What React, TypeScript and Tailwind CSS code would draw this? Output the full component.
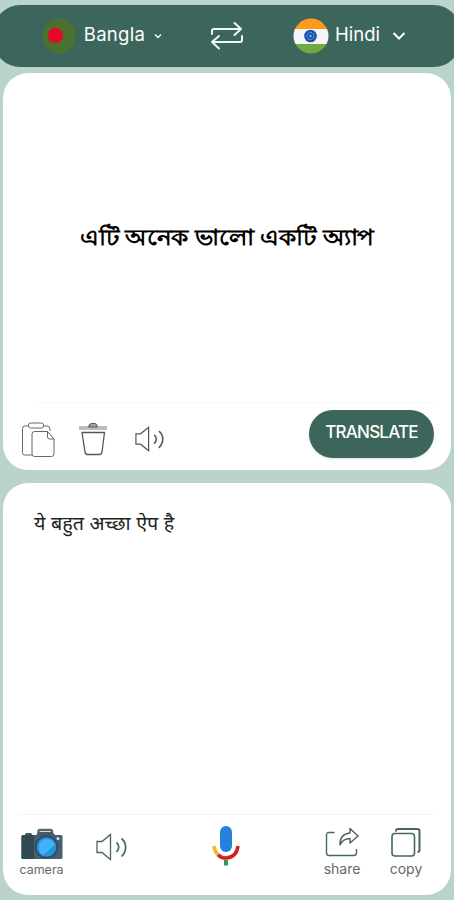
import { useState } from "react";

const textFont = "font-['Inter','Noto_Sans',sans-serif]";

function SpeakerIcon({ className }: { className: string }) {
  return (
    <svg viewBox="0 0 32 28" fill="none" stroke="currentColor" strokeWidth="1.300" className={className}>
      <path d="M1 8.500h5L14.500 1.500v25L6 19.500H1z" />
      <path d="M20.500 9.500c3 2.500 3 6.500 0 9.500M25.500 5.500c5.500 4.500 5.500 12.500 0 18" strokeWidth="1.700" />
    </svg>
  );
}

function PasteIcon() {
  return (
    <svg viewBox="0 0 34 36" fill="none" stroke="#66666e" className="h-9 w-[34px]">
      <path d="M8 4H3.500Q1.500 4 1.500 6.500V30.500Q1.500 33 3.500 33H11M22 4H26Q29 4 29 7V9" />
      <rect x="7.500" y="1" width="15" height="5" rx="2" />
      <path d="M26.500 9.500H13.500Q11 9.500 11 12V32Q11 34.500 13.500 34.500H30.500Q33 34.500 33 32V17z" />
      <path d="M26.500 9.500V15Q26.500 17 28.500 17H33" />
    </svg>
  );
}

function TrashIcon() {
  return (
    <svg viewBox="0 0 28 34" fill="none" stroke="#55555f" className="h-[34px] w-7">
      <path d="M0 4H28M0 6H28" strokeWidth="0.8" />
      <path d="M9.500 4Q10 0.500 12.500 0.500H16Q18 0.500 18.500 4z" fill="#a4a4aa" />
      <path d="M3 9.500H25.500L23 29Q22.500 31.500 20.500 31.500H8.500Q6.500 31.500 6 29z" strokeWidth="1.300" />
    </svg>
  );
}

function SwapIcon() {
  return (
    <svg viewBox="0 0 34 30" fill="none" stroke="#f3f8f6" strokeWidth="2" strokeLinecap="round" strokeLinejoin="round" className="h-[30px] w-[34px]">
      <path d="M2 13V10Q2 8 4 8H31M24.500 2L31 8L24.500 14" />
      <path d="M32 15V19Q32 21 30 21H2M9 15L2 21L9 27.500" />
    </svg>
  );
}

function BanglaFlag() {
  return (
    <svg viewBox="0 0 34 36" className="h-9 w-[34px]">
      <ellipse cx="17" cy="18" rx="16.500" ry="17.500" fill="#4b7030" />
      <circle cx="13.500" cy="17.500" r="7.700" fill="#e30a2b" />
    </svg>
  );
}

function IndiaFlag() {
  return (
    <svg viewBox="0 0 36 36" className="size-9">
      <clipPath id="india">
        <circle cx="18" cy="18" r="17.500" />
      </clipPath>
      <g clipPath="url(#india)">
        <path d="M0 0h36v11H0z" fill="#fb9b1b" />
        <path d="M0 11h36v15H0z" fill="#f3f5f8" />
        <path d="M0 26h36v10H0z" fill="#72a842" />
      </g>
      <circle cx="17.500" cy="18" r="6.300" fill="#1c50ad" />
      <circle cx="17.500" cy="18" r="3.600" fill="none" stroke="#8cace0" strokeDasharray="2 1.200" />
      <circle cx="17.500" cy="18" r="1.200" fill="#8cace0" />
    </svg>
  );
}

function CameraIcon() {
  return (
    <svg viewBox="0 0 42 32" className="h-8 w-[42px]">
      <path d="M17.500 6V3.500Q17.500 2 19 2H29.500Q31 2 31 3.500V6" fill="none" stroke="#536a68" strokeWidth="2.500" />
      <rect x="4" y="5" width="7" height="4" rx="1.500" fill="#3e565c" />
      <rect x="0.500" y="7" width="41" height="24" rx="1.500" fill="#485e6e" />
      <path d="M2 7H13V31H2Q0.500 31 0.500 29.500V8.500Q0.500 7 2 7" fill="#324a56" />
      <path d="M15 7L18 4H31L34 7" fill="#435b64" />
      <circle cx="25.500" cy="19" r="11.500" fill="#344a5c" />
      <circle cx="25.500" cy="19" r="9.800" fill="#2196e8" />
      <path d="M18 19Q18 12 25.500 11Q32 11 34 17L22 27Q18 25 18 19" fill="#42b2f5" />
      <circle cx="37" cy="10.500" r="1.500" fill="#d9e4e6" />
    </svg>
  );
}

function MicIcon() {
  return (
    <svg viewBox="0 0 28 40" fill="none" className="h-10 w-7">
      <rect x="8" y="0" width="12" height="26" rx="6" fill="#2383dc" />
      <path d="M14 34V39.500" stroke="#2ea04a" strokeWidth="4" />
      <path d="M2 20Q2.500 25.500 6 28.700" stroke="#f5b921" strokeWidth="3.500" />
      <path d="M6 28.700Q9 32 14 32Q24.500 31.500 26 20" stroke="#d6211f" strokeWidth="3.500" />
    </svg>
  );
}

function ShareIcon() {
  return (
    <svg viewBox="0 0 34 30" fill="none" stroke="#47665d" strokeWidth="1.400" strokeLinejoin="round" className="h-[30px] w-[34px]">
      <path d="M9.500 5.500H4Q1.500 5.500 1.500 8V25.500Q1.500 28.500 4 28.500H29Q31.500 28.500 31.500 25.500V22" />
      <path d="M15 18Q14.500 7 25 6V1.500L33 9L25 16V11.500Q18 11.500 15 18z" />
    </svg>
  );
}

function CopyIcon() {
  return (
    <svg viewBox="0 0 32 31" fill="none" stroke="#47665d" strokeWidth="1.600" className="h-[31px] w-8">
      <rect x="2" y="6.500" width="22.500" height="22.500" rx="3" />
      <path d="M6 4.500V4Q6 2 8 2H27Q29.500 2 29.500 4V23Q29.500 25 27.500 25" strokeWidth="2" />
    </svg>
  );
}

export default function App() {
  const [input] = useState("এটি অনেক ভালো একটি অ্যাপ");
  const [output] = useState("ये बहुत अच्छा ऐप है");

  return (
    <div className={`h-[900px] w-[454px] overflow-hidden bg-[#bad3cc] pt-[5px] ${textFont}`}>
      {/* Language bar */}
      <header className="-mx-1.5 flex h-[62px] items-center rounded-[26px] bg-[#3c655b] pl-12 text-white">
        <button className="flex w-[168px] items-center">
          <BanglaFlag />
          <span className="-mt-1 ml-[5px] w-[67px] whitespace-nowrap text-[18.500px] leading-6 tracking-[0.3px]">Bangla</span>
          <svg viewBox="0 0 8 6" fill="none" stroke="white" strokeWidth="1.300" className="ml-1.5 h-1.5 w-2">
            <path d="M1 1.500L4 4.500L7 1.500" />
          </svg>
        </button>
        <button>
          <SwapIcon />
        </button>
        <button className="ml-[49px] flex items-center">
          <IndiaFlag />
          <span className="-mt-1 ml-1.5 w-[45px] whitespace-nowrap text-[18.500px] leading-6">Hindi</span>
          <svg viewBox="0 0 14 10" fill="none" stroke="white" strokeWidth="2" className="ml-3 h-2.5 w-3.5">
            <path d="M1.500 2L7 7.500L12.500 2" />
          </svg>
        </button>
      </header>

      {/* Source text */}
      <section className="mx-[3px] mt-1.5 flex h-[397px] flex-col rounded-[25px] bg-white">
        <div className="flex h-[329px] items-center justify-center whitespace-nowrap text-[22px] font-semibold text-black">
          <p className="origin-center scale-x-[1.123]">{input}</p>
        </div>
        <div className="mr-4 ml-8 h-px bg-[#f9f9f9]" />
        <div className="flex h-[67px] items-start pl-[18px]">
          <button className="mt-[19px]"><PasteIcon /></button>
          <button className="mt-5 ml-6"><TrashIcon /></button>
          <button className="mt-[22px] ml-7 text-[#55555f]"><SpeakerIcon className="h-7 w-[30px]" /></button>
          <button className="mt-[7px] ml-[144px] flex h-[48px] w-[125px] items-center justify-center rounded-full bg-[#3c655b] pb-0.5 text-[17px] font-medium tracking-[-0.8px] text-white shadow-sm">
            TRANSLATE
          </button>
        </div>
      </section>

      {/* Translated text */}
      <section className="mx-[3px] mt-[13px] flex h-[412px] flex-col rounded-[25px] bg-white">
        <div className="h-[331px] pt-[26px] pl-[31px] text-[19.700px] leading-7 text-[#222]">
          <p>{output}</p>
        </div>
        <div className="mr-4 ml-4 h-px bg-[#f5f5f5]" />
        <div className="flex items-start pl-[17px] text-[#68686c]">
          <button className="mt-[13px] flex w-[43px] flex-col items-center">
            <CameraIcon />
            <span className="mt-0.5 text-[12.500px] leading-4">camera</span>
          </button>
          <button className="mt-[18px] ml-[33px] text-[#47665d]"><SpeakerIcon className="h-7 w-8" /></button>
          <button className="mt-[11px] ml-[84px]"><MicIcon /></button>
          <button className="mt-3 ml-[82px] flex w-[40px] flex-col items-center">
            <ShareIcon />
            <span className="mt-1 text-[14px] leading-4">share</span>
          </button>
          <button className="mt-3 ml-[26px] flex w-[36px] flex-col items-center">
            <CopyIcon />
            <span className="mt-[3px] text-[14px] leading-4">copy</span>
          </button>
        </div>
      </section>
    </div>
  );
}
